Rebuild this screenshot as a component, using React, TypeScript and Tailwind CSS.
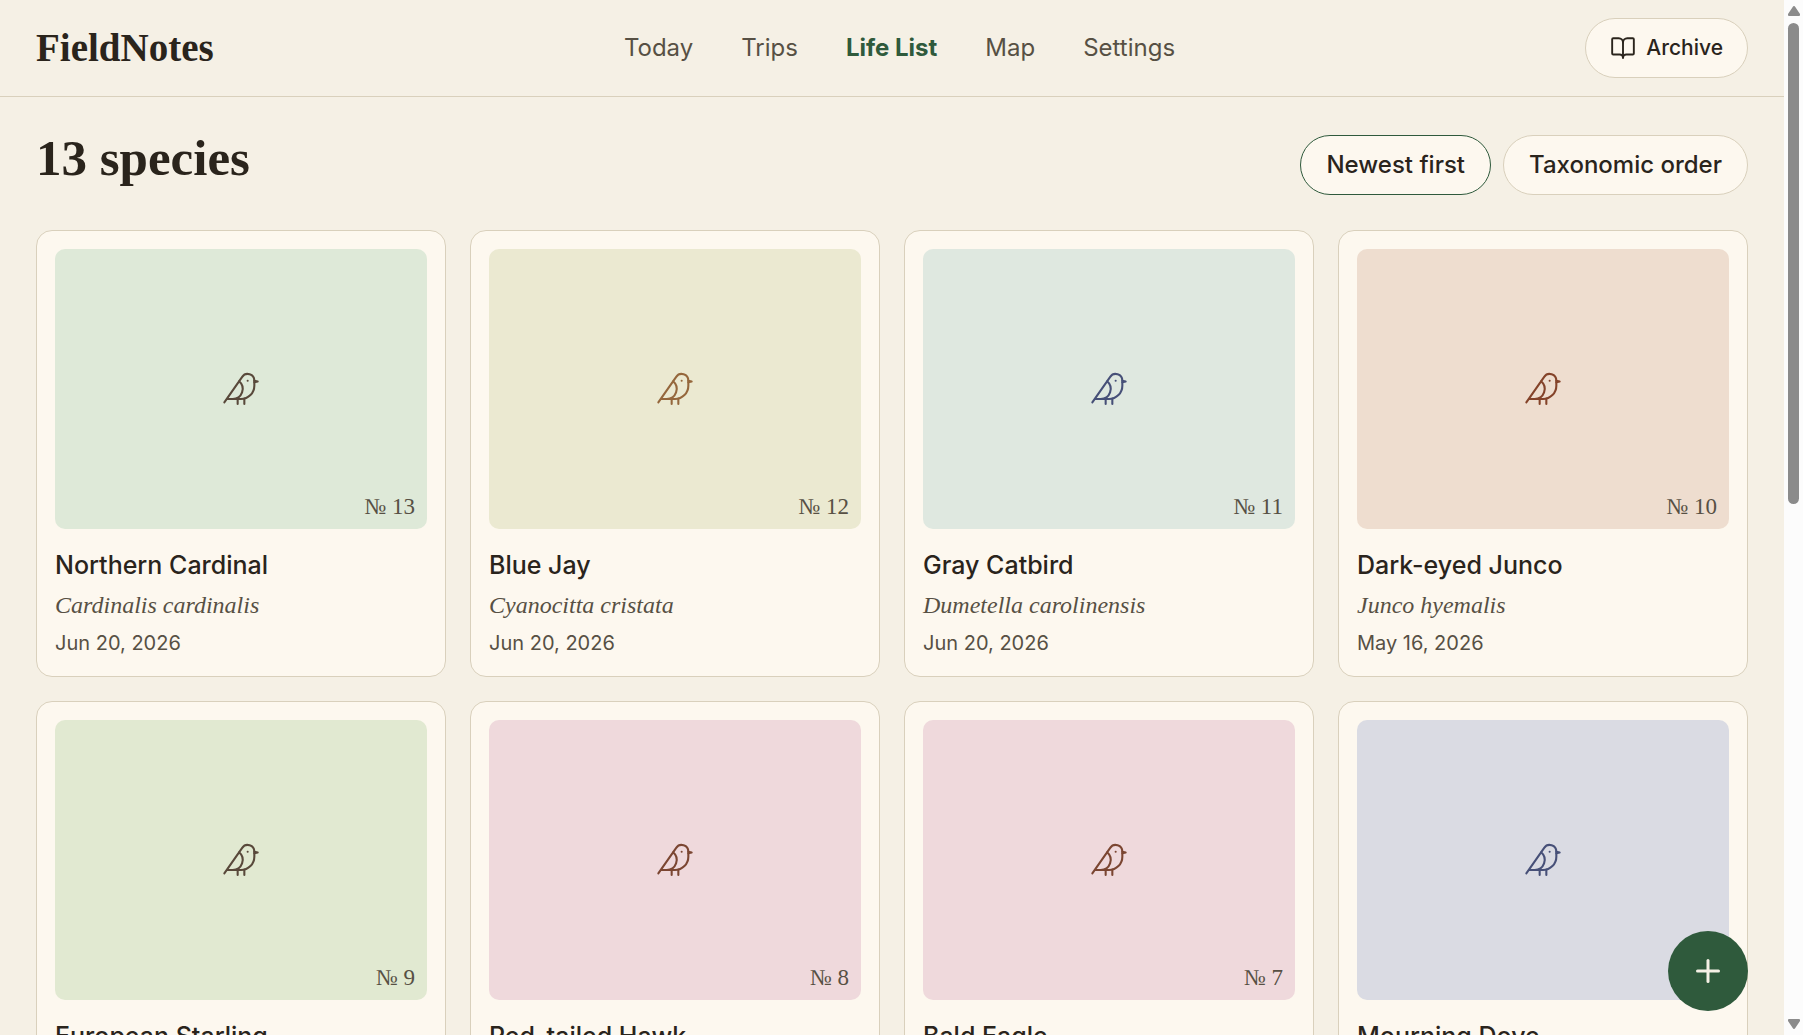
import { Bird, BookOpen, Plus } from 'lucide-react';

const navItems = ['Today', 'Trips', 'Life List', 'Map', 'Settings'];

const species = [
  { no: 13, name: 'Northern Cardinal', latin: 'Cardinalis cardinalis', date: 'Jun 20, 2026', tile: 'bg-[#dee9d8] text-[#59493b]' },
  { no: 12, name: 'Blue Jay', latin: 'Cyanocitta cristata', date: 'Jun 20, 2026', tile: 'bg-[#ebe9d1] text-[#95673c]' },
  { no: 11, name: 'Gray Catbird', latin: 'Dumetella carolinensis', date: 'Jun 20, 2026', tile: 'bg-[#dfe8e0] text-[#475078]' },
  { no: 10, name: 'Dark-eyed Junco', latin: 'Junco hyemalis', date: 'May 16, 2026', tile: 'bg-[#eeddcf] text-[#84432a]' },
  { no: 9, name: 'European Starling', latin: 'Sturnus vulgaris', date: 'May 16, 2026', tile: 'bg-[#e1e9d1] text-[#59493b]' },
  { no: 8, name: 'Red-tailed Hawk', latin: 'Buteo jamaicensis', date: 'May 16, 2026', tile: 'bg-[#efd9dc] text-[#7b4632]' },
  { no: 7, name: 'Bald Eagle', latin: 'Haliaeetus leucocephalus', date: 'May 16, 2026', tile: 'bg-[#efd9dc] text-[#7b4632]' },
  { no: 6, name: 'Mourning Dove', latin: 'Zenaida macroura', date: 'May 16, 2026', tile: 'bg-[#dadbe3] text-[#475078]' },
];

function SpeciesCard({ item }: { item: (typeof species)[number] }) {
  return (
    <article className="rounded-2xl border border-[#d9d0bc] bg-[#fdf8ef] p-[18px] pb-[19px]">
      <div className={`relative flex aspect-[93/70] items-center justify-center rounded-[10px] ${item.tile}`}>
        <Bird size={40} strokeWidth={1.25} />
        <span className="absolute right-3 bottom-2 font-['Liberation_Serif',serif] text-[23px] leading-7 text-[#575044]">
          № {item.no}
        </span>
      </div>
      <h2 className="mt-5 text-[25px] leading-8 font-medium text-[#2a241c]">{item.name}</h2>
      <p className="mt-2 font-['Liberation_Serif',serif] text-2xl leading-8 text-[#575044] italic">{item.latin}</p>
      <p className="mt-2 text-xl leading-7 text-[#575044]">{item.date}</p>
    </article>
  );
}

// Slim track on the right edge of the window
function Scrollbar() {
  return (
    <div className="flex w-[19px] shrink-0 flex-col items-center bg-[#fcfcfc] py-[5px] text-[#8b8b8b]" aria-hidden="true">
      <svg viewBox="0 0 12 11" className="h-[11px] w-3 shrink-0" fill="currentColor">
        <path d="M6 1q.8 0 1.300 1L12 9q.3 2-1 2H1q-1.300 0-1-2l4.700-7Q5.200 1 6 1z" />
      </svg>
      <div className="flex-1 pt-[7px]">
        <div className="h-[481px] w-[11px] rounded-full bg-[#8b8b8b]" />
      </div>
      <svg viewBox="0 0 12 11" className="h-[11px] w-3 shrink-0" fill="currentColor">
        <path d="M6 10q.8 0 1.300-1L12 2q.3-2-1-2H1Q-.3 0 0 2l4.700 7Q5.200 10 6 10z" />
      </svg>
    </div>
  );
}

export default function App() {
  return (
    <div className="flex h-screen overflow-hidden bg-[#f5f0e5] font-['Inter',sans-serif] text-[#2a241c]">
      <div className="relative min-w-0 flex-1">
        <div className="h-full overflow-y-auto [scrollbar-width:none]">
          <header className="flex items-center justify-between border-b border-[#d9d0bc] px-9 py-[18px]">
            <a href="#" className="font-['Liberation_Serif',serif] text-[39px] leading-10 font-bold">
              FieldNotes
            </a>
            <nav className="flex gap-12 text-2xl">
              {navItems.map((label) => (
                <a
                  key={label}
                  href="#"
                  className={label === 'Life List' ? 'font-bold text-[#2f5a3c]' : 'text-[#575044]'}
                >
                  {label}
                </a>
              ))}
            </nav>
            <button
              type="button"
              className="flex h-[60px] items-center gap-2.5 rounded-full border border-[#d9d0bc] bg-[#fdf8ef] px-6 text-[21px] font-medium"
            >
              <BookOpen size={26} strokeWidth={1.75} />
              Archive
            </button>
          </header>

          <main className="px-9 pt-[38px] pb-9">
            <div className="mb-[35px] flex items-start justify-between">
              <h1 className="font-['Liberation_Serif',serif] text-[51px] leading-[46px] font-bold">13 species</h1>
              <div className="flex gap-3 text-2xl font-medium">
                <button type="button" className="h-[60px] rounded-full border border-[#2f5a3c] bg-[#fdf8ef] px-[25px]">
                  Newest first
                </button>
                <button type="button" className="h-[60px] rounded-full border border-[#d9d0bc] bg-[#fdf8ef] px-[25px]">
                  Taxonomic order
                </button>
              </div>
            </div>

            <div className="grid grid-cols-4 gap-6">
              {species.map((item) => (
                <SpeciesCard key={item.no} item={item} />
              ))}
            </div>
          </main>
        </div>

        <button
          type="button"
          aria-label="Add sighting"
          className="absolute right-9 bottom-6 flex size-20 items-center justify-center rounded-full bg-[#2f5a3c] text-[#f5f0e5]"
        >
          <Plus size={36} strokeWidth={2} />
        </button>
      </div>
      <Scrollbar />
    </div>
  );
}
